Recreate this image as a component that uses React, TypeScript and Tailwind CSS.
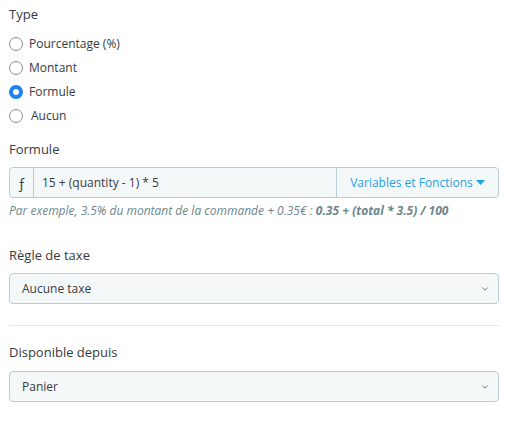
import { ChevronDown } from 'lucide-react';

const radios = [
  { label: 'Pourcentage (%)', checked: false },
  { label: 'Montant', checked: false },
  { label: 'Formule', checked: true },
  { label: 'Aucun', checked: false, extra: true },
];

function Radio({ label, checked, extra }: { label: string; checked: boolean; extra?: boolean }) {
  return (
    <label className="flex items-center h-6">
      {checked ? (
        <span className="w-[14px] h-[14px] rounded-full bg-[#1a82fb] flex items-center justify-center">
          <span className="w-[6px] h-[6px] rounded-full bg-white" />
        </span>
      ) : (
        <span className="w-[14px] h-[14px] rounded-full border-[1.5px] border-[#8a8a8e] bg-white" />
      )}
      <span className={`${extra ? 'ml-[8px]' : 'ml-[6px]'} text-[12px] text-[#363a41]`}>{label}</span>
    </label>
  );
}

function Select({ value }: { value: string }) {
  return (
    <div className="h-[31px] flex items-center justify-between rounded border border-[#bbcdd2] bg-[#f5f8f9] pl-[12px] pr-[8px]">
      <span className="text-[12px] text-[#363a41]">{value}</span>
      <ChevronDown size={10} strokeWidth={1.75} className="text-[#444]" />
    </div>
  );
}

export default function App() {
  return (
    <div className="w-[509px] h-[425px] bg-white pl-[9px] pr-[10px] pt-[4px]" style={{ fontFamily: '"Open Sans", sans-serif' }}>
      <div className="text-[13px] leading-[20px] text-[#363a41]">Type</div>
      <div className="mt-[8px]">
        {radios.map(r => (
          <Radio key={r.label} {...r} />
        ))}
      </div>

      <div className="mt-[11px] text-[13px] leading-[20px] text-[#363a41]">Formule</div>
      <div className="mt-[8px] h-[31px] flex rounded border border-[#bbcdd2] bg-[#f5f8f9]">
        <div className="w-[24px] flex items-center justify-center border-r border-[#bbcdd2] text-[14px] text-[#363a41]">ƒ</div>
        <div className="flex-1 flex items-center pl-[8px] text-[12px] text-[#363a41]">15 + (quantity - 1) * 5</div>
        <div className="w-[162px] flex items-center justify-center gap-[3px] border-l border-[#bbcdd2] text-[12px] text-[#25a2e5]">
          Variables et Fonctions
          <svg width="9" height="5" viewBox="0 0 9 5"><path d="M0 0h9L4.5 5z" fill="#25a2e5" /></svg>
        </div>
      </div>
      <div className="mt-[4px] text-[12px] leading-[18px] italic text-[#6c868e]">
        Par exemple, 3.5% du montant de la commande + 0.35€ : <b>0.35 + (total * 3.5) / 100</b>
      </div>

      <div className="mt-[25px] text-[13px] leading-[20px] text-[#363a41]">Règle de taxe</div>
      <div className="mt-[8px]">
        <Select value="Aucune taxe" />
      </div>
      <div className="mt-[21px] border-t border-[#e6e9ea]" />

      <div className="mt-[16px] text-[13px] leading-[20px] text-[#363a41]">Disponible depuis</div>
      <div className="mt-[9px]">
        <Select value="Panier" />
      </div>
    </div>
  );
}
